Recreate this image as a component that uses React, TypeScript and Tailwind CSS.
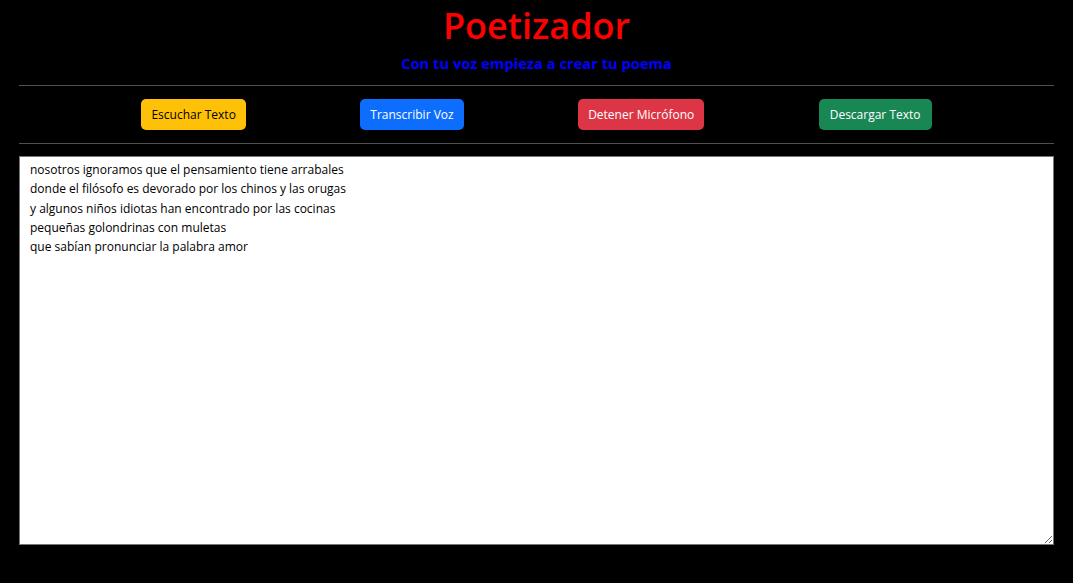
export default function App() {
  const lines = [
    'nosotros ignoramos que el pensamiento tiene arrabales',
    'donde el filósofo es devorado por los chinos y las orugas',
    'y algunos niños idiotas han encontrado por las cocinas',
    'pequeñas golondrinas con muletas',
    'que sabían pronunciar la palabra amor',
  ];

  return (
    <div className="min-h-[583px] bg-black px-[19px] font-['Open_Sans',sans-serif]">
      <h1 className="pt-[2px] text-center text-[36px] font-semibold leading-[48px] text-[#ff0000]">Poetizador</h1>
      <h5 className="mt-[1px] text-center text-[14.7px] font-bold leading-[24px] text-[#0000ff]">
        Con tu voz empieza a crear tu poema
      </h5>
      <hr className="mt-[10px] border-t border-[#505050]" />
      <div className="flex h-[57px] items-center justify-evenly px-2">
        <button className="h-[31px] rounded-[5px] bg-[#ffc107] px-[10px] text-[12px] text-black">Escuchar Texto</button>
        <button className="h-[31px] rounded-[5px] bg-[#0d6efd] px-[10px] text-[12px] text-white">Transcribir Voz</button>
        <button className="h-[31px] rounded-[5px] bg-[#dc3545] px-[10px] text-[12px] text-white">Detener Micrófono</button>
        <button className="h-[31px] rounded-[5px] bg-[#198754] px-[11px] text-[12px] text-white">Descargar Texto</button>
      </div>
      <hr className="border-t border-[#505050]" />
      <textarea
        className="mt-[12px] block h-[389px] w-full border border-[#767676] bg-white px-[10px] pt-[3px] text-[12px] leading-[19.25px] text-black"
        defaultValue={lines.join('\n')}
      />
    </div>
  );
}
